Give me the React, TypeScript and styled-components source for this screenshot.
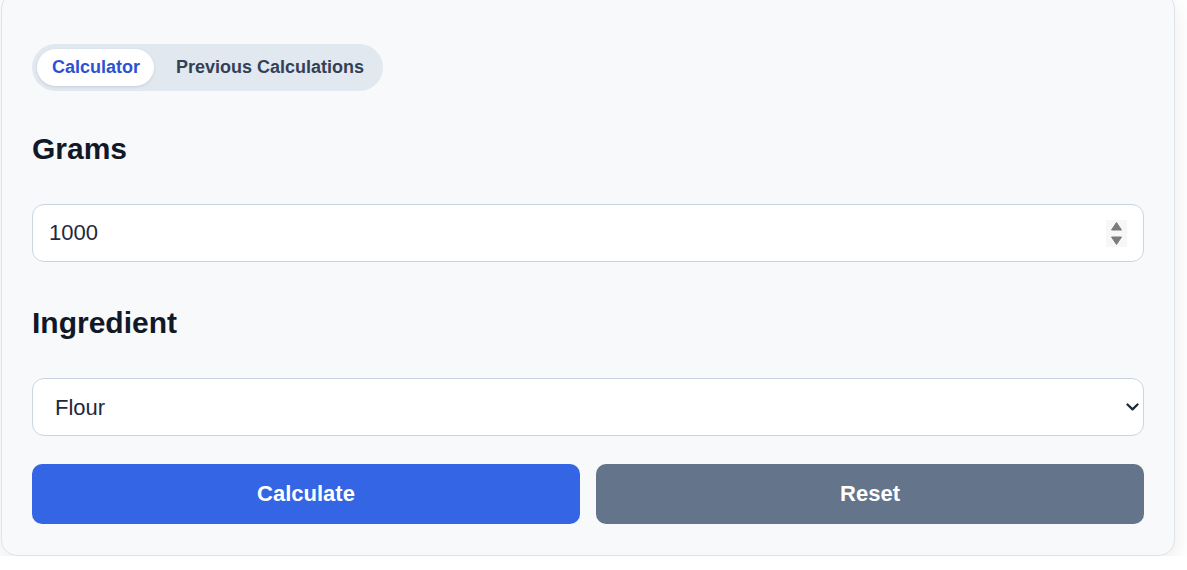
import { useState } from "react"
import styled, { createGlobalStyle } from "styled-components"

const GlobalStyle = createGlobalStyle`
  body {
    margin: 0;
    background-color: #fff;
    font-family: "Liberation Sans", Arial, sans-serif;
  }
`

export default function App() {
  const [tab, setTab] = useState("calculator")
  const [grams, setGrams] = useState("1000")
  const [ingredient, setIngredient] = useState("flour")

  return (
    <>
      <GlobalStyle />
      <Card>
        <Tabs>
          <Tab $active={tab === "calculator"} onClick={() => setTab("calculator")}>Calculator</Tab>
          <Tab $active={tab === "history"} onClick={() => setTab("history")}>Previous Calculations</Tab>
        </Tabs>

        <Label htmlFor="grams">Grams</Label>
        <FieldBox>
          <NumberInput
            id="grams" type="number"
            value={grams}
            onChange={event => setGrams(event.target.value)}
          />
          <Spinner width="21" height="27" viewBox="0 0 21 27">
            <rect x="0" y="0" width="21" height="27" fill="#f7f7f7" />
            <path d="M10.5 2.5 L15.5 10 L5.5 10 Z" fill="#7b7b7b" stroke="#7b7b7b" strokeWidth="1" strokeLinejoin="round" />
            <path d="M10.5 24.5 L15.5 17 L5.5 17 Z" fill="#7b7b7b" stroke="#7b7b7b" strokeWidth="1" strokeLinejoin="round" />
          </Spinner>
        </FieldBox>

        <Label htmlFor="ingredient" $gap>Ingredient</Label>
        <SelectBox>
          <Select
            id="ingredient"
            value={ingredient}
            onChange={event => setIngredient(event.target.value)}
          >
            <option value="flour">Flour</option>
            <option value="sugar">Sugar</option>
            <option value="butter">Butter</option>
          </Select>
          <Chevron width="13" height="8" viewBox="0 0 13 8">
            <polyline points="1.5,1.5 6.5,6.3 11.5,1.5" fill="none" stroke="#1f2937" strokeWidth="2.3" strokeLinecap="round" strokeLinejoin="round" />
          </Chevron>
        </SelectBox>

        <Actions>
          <ActionBtn $variant="primary">Calculate</ActionBtn>
          <ActionBtn $variant="secondary" onClick={() => setGrams("")}>Reset</ActionBtn>
        </Actions>
      </Card>
    </>
  )
}

const Card = styled.div`
  box-sizing: border-box;
  width: 1174px;
  margin: -8px 0 0 1px;
  padding: 30px 30px 31px;

  background-color: #f8f9fb;
  border: 1px solid #dfe3e8;
  border-radius: 16px;
  box-shadow: 0 8px 24px rgba(0, 0, 0, 0.08);

  display: flex;
  flex-direction: column;
`

const Tabs = styled.div`
  align-self: flex-start;
  display: flex;
  gap: 7px;
  margin-top: 21px;
  margin-bottom: 40px;
  padding: 5px;

  background-color: #e2e8f0;
  border-radius: 999px;
`

const Tab = styled.button<{ $active?: boolean }>`
  padding: 8px 14px 8px 15px;
  border: 0;
  border-radius: 999px;

  font-family: "Liberation Sans", Arial, sans-serif;
  font-size: 18px;
  font-weight: 700;
  line-height: 21px;

  background-color: ${p => (p.$active ? "#fff" : "transparent")};
  color: ${p => (p.$active ? "#2b52d4" : "#334155")};
  box-shadow: ${p => (p.$active ? "0 1px 3px rgba(15, 23, 42, 0.12)" : "none")};
  cursor: pointer;
`

const Label = styled.label<{ $gap?: boolean }>`
  display: block;
  margin: ${p => (p.$gap ? "43px" : "0")} 0 37px;

  font-size: 30px;
  font-weight: 700;
  line-height: 36px;
  color: #111827;
`

const FieldBox = styled.div`
  box-sizing: border-box;
  height: 58px;
  padding: 0 15px 0 16px;

  display: flex;
  align-items: center;

  background-color: #fff;
  border: 1px solid #cbd5e1;
  border-radius: 12px;
`

const SelectBox = styled(FieldBox)`
  padding: 0 4px 0 22px;
`

const NumberInput = styled.input`
  flex: 1;
  min-width: 0;
  padding: 0;
  border: 0;
  outline: none;
  background: transparent;

  font-family: "Liberation Sans", Arial, sans-serif;
  font-size: 22px;
  color: #1e293b;

  appearance: textfield;
  -moz-appearance: textfield;

  &::-webkit-inner-spin-button,
  &::-webkit-outer-spin-button {
    -webkit-appearance: none;
    margin: 0;
  }
`

const Spinner = styled.svg`
  flex-shrink: 0;
  margin-right: 1px;
`

const Select = styled.select`
  flex: 1;
  min-width: 0;
  height: 100%;
  padding: 0;
  border: 0;
  outline: none;
  background: transparent;
  appearance: none;
  -webkit-appearance: none;

  font-family: "Liberation Sans", Arial, sans-serif;
  font-size: 22px;
  color: #1e293b;
  cursor: pointer;
`

const Chevron = styled.svg`
  flex-shrink: 0;
  margin-left: 8px;
  pointer-events: none;
`

const Actions = styled.div`
  display: grid;
  grid-template-columns: 1fr 1fr;
  gap: 16px;
  margin-top: 28px;
`

const ActionBtn = styled.button<{ $variant: "primary" | "secondary" }>`
  height: 60px;
  border: 0;
  border-radius: 10px;

  font-family: "Liberation Sans", Arial, sans-serif;
  font-size: 22px;
  font-weight: 700;
  color: #fff;
  background-color: ${p => (p.$variant === "primary" ? "#3365e4" : "#64748b")};
  cursor: pointer;

  &:hover {
    filter: brightness(0.95);
    transition: 0.2s;
  }
`
